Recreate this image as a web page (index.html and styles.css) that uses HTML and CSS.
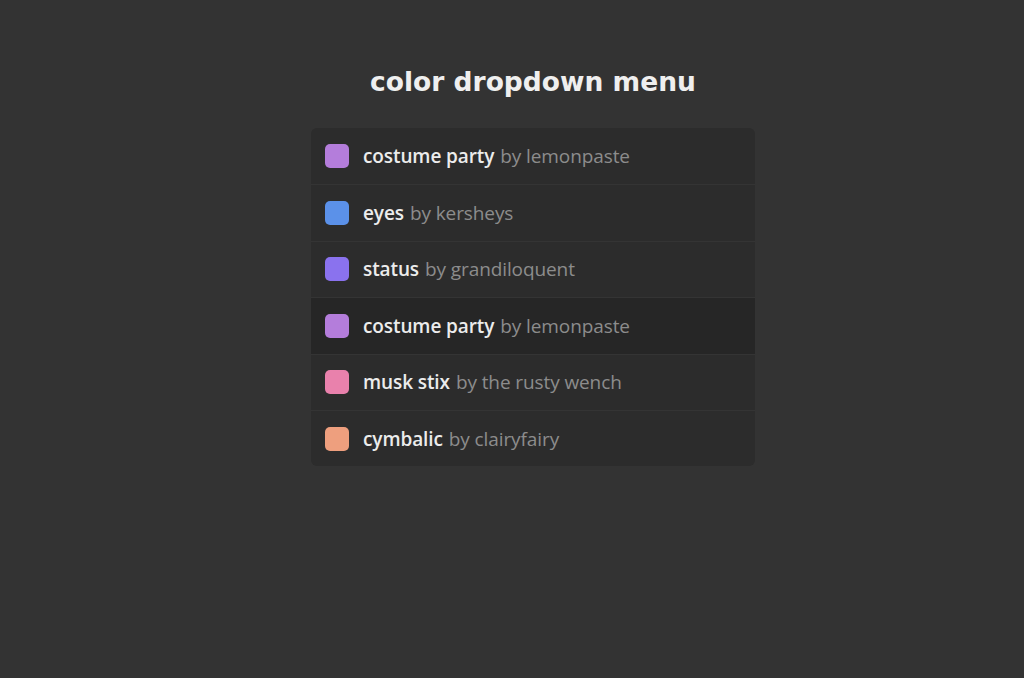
FILE: index.html
```
<!DOCTYPE html>
<html lang="en">
<head>
    <meta charset="UTF-8">
    <meta name="viewport" content="width=device-width, initial-scale=1.0">
    <title>color dropdown menu</title>
    <link rel="stylesheet" href="styles.css">
</head>
<body>
    <div class="page">
        <h1>color dropdown menu</h1>

        <ul class="palette-list">
            <li class="palette">
                <span class="swatch" style="background: #b47ddb"></span>
                <span class="name">costume party</span>
                <span class="author">by lemonpaste</span>
            </li>
            <li class="palette">
                <span class="swatch" style="background: #5b91e9"></span>
                <span class="name">eyes</span>
                <span class="author">by kersheys</span>
            </li>
            <li class="palette">
                <span class="swatch" style="background: #8a72ee"></span>
                <span class="name">status</span>
                <span class="author">by grandiloquent</span>
            </li>
            <li class="palette hover">
                <span class="swatch" style="background: #b47ddb"></span>
                <span class="name">costume party</span>
                <span class="author">by lemonpaste</span>
            </li>
            <li class="palette">
                <span class="swatch" style="background: #e981ac"></span>
                <span class="name">musk stix</span>
                <span class="author">by the rusty wench</span>
            </li>
            <li class="palette">
                <span class="swatch" style="background: #ee9f7e"></span>
                <span class="name">cymbalic</span>
                <span class="author">by clairyfairy</span>
            </li>
        </ul>
    </div>
</body>
</html>
```

FILE: styles.css
```
:root {
    --background: #333333;
    --panel: #2c2c2c;
    --panel-hover: #262626;
    --divider: #343434;
    --text-color: #ececec;
    --muted: #8c8c8c;
}

* {
    box-sizing: border-box;
    margin: 0;
    padding: 0;
}

body {
    font-family: Tahoma, "DejaVu Sans", Verdana, sans-serif;
    background: var(--background);
    color: var(--text-color);
    padding: 64px 0 0 42px;
}

.page {
    width: 444px;
    margin: 0 auto;
}

h1 {
    font-size: 26.5px;
    font-weight: bold;
    text-align: center;
    line-height: 36px;
    margin-bottom: 28px;
    color: #efefef;
}

.palette-list {
    list-style: none;
    background: var(--panel);
    border-radius: 6px;
    overflow: hidden;
}

.palette {
    display: flex;
    align-items: center;
    height: 56.4px;
    padding: 0 14px;
    font-family: "Open Sans", "Noto Sans", sans-serif;
    font-size: 19px;
    letter-spacing: -0.1px;
    cursor: pointer;
}

.palette + .palette {
    border-top: 1px solid var(--divider);
}

.palette.hover,
.palette:hover {
    background: var(--panel-hover);
}

.swatch {
    width: 24px;
    height: 24px;
    border-radius: 5px;
    margin-right: 14px;
    flex-shrink: 0;
}

.name {
    color: var(--text-color);
    font-weight: 600;
    margin-right: 6px;
}

.author {
    color: var(--muted);
}
```
